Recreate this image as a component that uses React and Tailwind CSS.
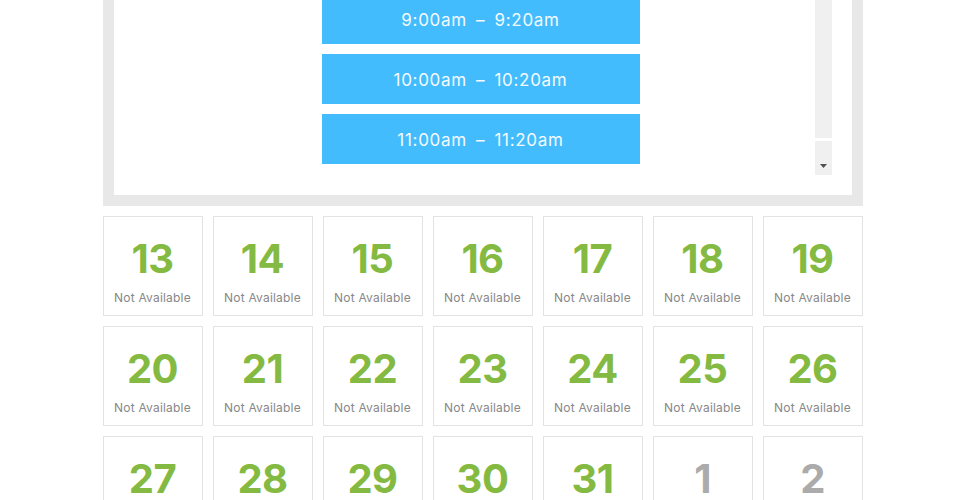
const slots = ['8:00am – 8:20am', '9:00am – 9:20am', '10:00am – 10:20am', '11:00am – 11:20am']

const days = [
  ...Array.from({ length: 19 }, (_, i) => ({ n: 13 + i, current: true })),
  { n: 1, current: false },
  { n: 2, current: false },
]

export default function App() {
  return (
    <div className="min-h-[500px] overflow-hidden bg-white font-['Inter',sans-serif]">
      <div className="mx-auto w-[760px]">
        {/* Time slot picker */}
        <div className="-mt-[97px] border-[11px] border-[#e8e8e8] bg-white p-[20px] pl-[208px]">
          <div className="flex h-[241px] overflow-hidden">
            <div className="flex flex-1 flex-col gap-[10px]">
              {slots.map(s => (
                <button
                  key={s}
                  className="h-[50px] w-[318px] shrink-0 bg-[#42bcfc] pt-[3px] text-[17px] tracking-[0.7px] text-[#f4faff]"
                >
                  {s.replace(' – ', '\u2002–\u2002')}
                </button>
              ))}
            </div>
            <div className="flex w-[17px] flex-col gap-[3px]">
              <div className="flex-1 bg-[#f0f0f0]" />
              <div className="flex h-[34px] items-end justify-center bg-[#f0f0f0] pb-[7px]">
                <svg width="7" height="4" viewBox="0 0 7 4">
                  <path d="M0 0h7L3.5 4z" fill="#505050" />
                </svg>
              </div>
            </div>
          </div>
        </div>

        {/* Calendar days */}
        <div className="mt-[10px] grid grid-cols-7 gap-[10px]">
          {days.map(d => (
            <div
              key={d.n + (d.current ? 'c' : 'n')}
              className="flex h-[100px] flex-col items-center border border-[#e3e3e3] pt-[18px]"
            >
              <span
                className={
                  'text-[40px] font-bold leading-[47px] tracking-[-0.5px] ' +
                  (d.current ? 'text-[#84ba41]' : 'text-[#ababab]')
                }
              >
                {d.n}
              </span>
              {d.current && (
                <span className="mt-[9px] text-[12px] leading-[14px] tracking-[0.2px] text-[#888]">Not Available</span>
              )}
            </div>
          ))}
        </div>
      </div>
    </div>
  )
}
